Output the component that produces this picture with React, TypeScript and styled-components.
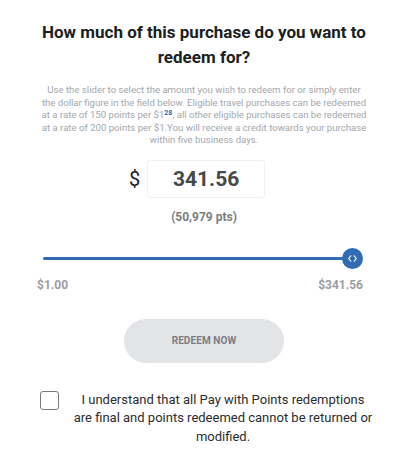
import React, { useState } from 'react';
import styled, { createGlobalStyle } from 'styled-components';

const PrimaryColor = '#2f6cb3';

const GlobalStyle = createGlobalStyle`
  body {
    margin: 0;
    background: #ffffff;
    font-family: Roboto, "Liberation Sans", Arial, sans-serif;
  }
`

const Page = styled.div`
  width: 408px;
  display: flex;
  flex-direction: column;
  align-items: center;
  padding-top: 20px;
  box-sizing: border-box;
`

const Title = styled.h1`
  margin: 0;
  width: 330px;
  font-size: 17px;
  line-height: 25px;
  font-weight: 700;
  color: #1b1f24;
  text-align: center;
`

const Description = styled.p`
  margin: 14px 0 0;
  width: 350px;
  font-size: 9.6px;
  line-height: 12.5px;
  color: #a3a7ad;
  text-align: center;

  sup {
    color: ${PrimaryColor};
    font-size: 7px;
    font-weight: 700;
    line-height: 1;
    vertical-align: 3px;
  }
`

const AmountRow = styled.div`
  display: flex;
  align-items: center;
  gap: 7px;
  margin-top: 13px;
  margin-left: -14px;
`

const Dollar = styled.span`
  font-size: 20px;
  color: #1e2226;
`

const AmountInput = styled.input`
  width: 118px;
  height: 38px;
  box-sizing: border-box;
  border: 1px solid #f0f0f0;
  border-radius: 3px;
  text-align: center;
  font-family: inherit;
  font-size: 21px;
  font-weight: 700;
  color: #45484c;
  outline: none;
  padding: 0;
`

const Points = styled.div`
  margin-top: 12px;
  font-size: 12px;
  line-height: 14px;
  font-weight: 700;
  color: #7b7e82;
`

const SliderArea = styled.div`
  width: 100%;
  padding: 0 56px 0 37px;
  box-sizing: border-box;
  margin-top: 33px;
`

const Track = styled.div`
  position: relative;
  height: 3px;
  margin-left: 6px;
  background: ${PrimaryColor};
  border-radius: 2px;
`

const Thumb = styled.div`
  position: absolute;
  right: -11px;
  top: 50%;
  width: 21px;
  height: 21px;
  margin-top: -10.5px;
  border-radius: 50%;
  background: ${PrimaryColor};
  display: flex;
  align-items: center;
  justify-content: center;
`

const RangeLabels = styled.div`
  display: flex;
  justify-content: space-between;
  width: 100%;
  padding: 0 45px 0 37px;
  box-sizing: border-box;
  margin-top: 18px;
  font-size: 12px;
  line-height: 14px;
  font-weight: 700;
  color: #9a9da2;
`

const RedeemButton = styled.button`
  margin-top: 27px;
  width: 160px;
  height: 44px;
  border: none;
  border-radius: 22px;
  background: #e3e4e7;
  color: #7a7d82;
  font-family: inherit;
  font-size: 10px;
  font-weight: 700;
  letter-spacing: 0.1px;
  cursor: default;
`

const Agreement = styled.label`
  display: flex;
  align-items: flex-start;
  gap: 12px;
  width: 100%;
  padding: 0 33px 0 40px;
  box-sizing: border-box;
  margin-top: 28px;
`

const Box = styled.span<{ $checked: boolean }>`
  flex: none;
  width: 19px;
  height: 19px;
  box-sizing: border-box;
  border: 1.5px solid #76797e;
  border-radius: 3px;
  background: ${p => (p.$checked ? PrimaryColor : '#fff')};
`

const AgreementText = styled.span`
  flex: 1;
  font-size: 13px;
  line-height: 18.5px;
  color: #2a2d31;
  text-align: center;
`

export default function App() {
  const [amount, setAmount] = useState('341.56');
  const [checked, setChecked] = useState(false);

  return (
    <Page>
      <GlobalStyle />
      <Title>How much of this purchase do you want to redeem for?</Title>
      <Description>
        Use the slider to select the amount you wish to redeem for or simply enter
        <br />
        the dollar figure in the field below. Eligible travel purchases can be redeemed
        <br />
        at a rate of 150 points per $1<sup>28</sup>, all other eligible purchases can be redeemed
        <br />
        at a rate of 200 points per $1.You will receive a credit towards your purchase
        <br />
        within five business days.
      </Description>
      <AmountRow>
        <Dollar>$</Dollar>
        <AmountInput value={amount} onChange={e => setAmount(e.target.value)} />
      </AmountRow>
      <Points>(50,979 pts)</Points>
      <SliderArea>
        <Track>
          <Thumb>
            <svg width="9" height="7" viewBox="0 0 9 7" fill="none" stroke="#fff" strokeWidth="1.1" strokeLinecap="round" strokeLinejoin="round">
              <path d="M2.8 0.8 L0.6 3.5 L2.8 6.2" />
              <path d="M6.2 0.8 L8.4 3.5 L6.2 6.2" />
            </svg>
          </Thumb>
        </Track>
      </SliderArea>
      <RangeLabels>
        <span>$1.00</span>
        <span>$341.56</span>
      </RangeLabels>
      <RedeemButton>REDEEM NOW</RedeemButton>
      <Agreement onClick={() => setChecked(c => !c)}>
        <Box $checked={checked} />
        <AgreementText>
          I understand that all Pay with Points redemptions are final and points redeemed cannot
          be returned or modified.
        </AgreementText>
      </Agreement>
    </Page>
  );
}
